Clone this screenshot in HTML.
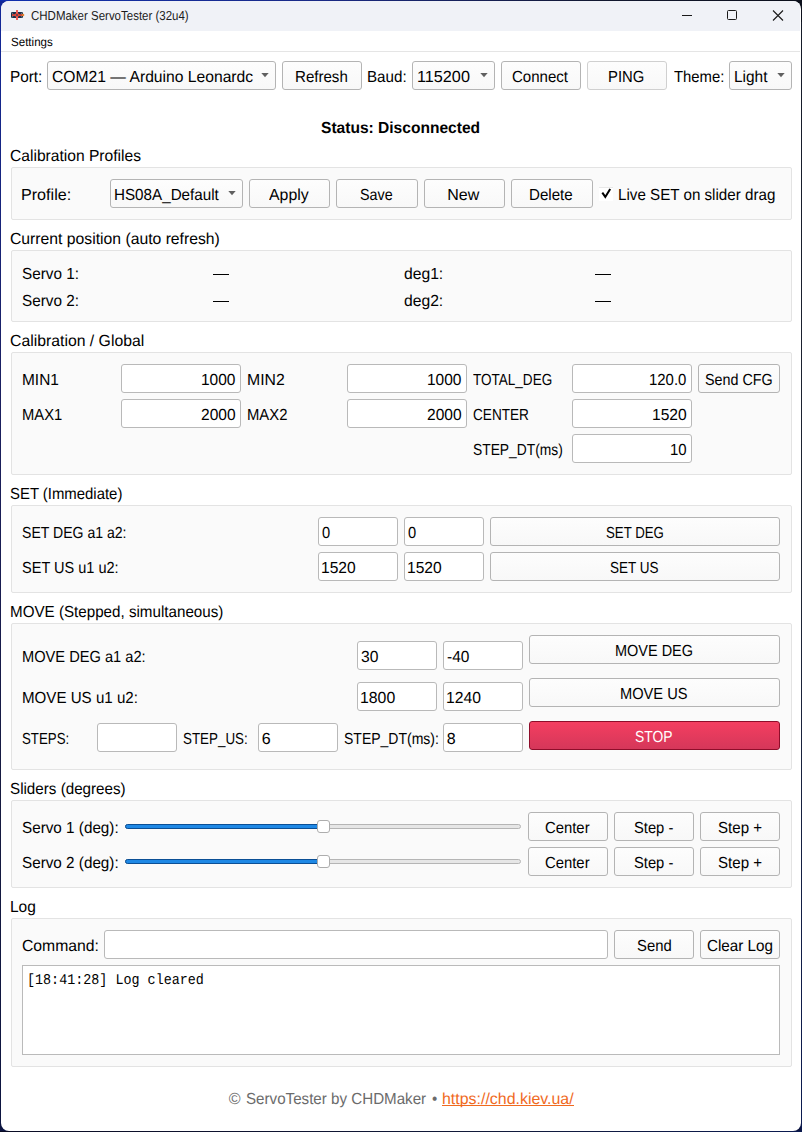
<!DOCTYPE html>
<html><head><meta charset="utf-8"><title>CHDMaker ServoTester</title>
<style>html,body{margin:0;padding:0;width:802px;height:1132px;overflow:hidden;background:#fff;font-family:"Liberation Sans",sans-serif;text-rendering:geometricPrecision}</style>
</head><body>
<div style="position:absolute;left:0;top:0;width:802px;height:1132px;background:linear-gradient(180deg,#12289a 0%,#1b2060 35%,#161a40 70%,#0c1440 100%)"></div>
<div style="position:absolute;left:0;top:0;width:802px;height:1px;background:linear-gradient(90deg,#0f2fae 0%,#1a2a86 40%,#121830 75%,#0c101c 100%)"></div>
<div style="position:absolute;left:801px;top:0;width:1px;height:1132px;background:linear-gradient(180deg,#141a28 0%,#1f2533 50%,#0a1a50 100%)"></div>
<div style="position:absolute;left:0;top:1131px;width:802px;height:1px;background:linear-gradient(90deg,#0a0c24 0%,#121a3a 60%,#0a1a50 100%)"></div>
<div style="position:absolute;left:780px;top:0;width:22px;height:22px;background:#0c101c"></div>
<div style="position:absolute;left:1px;top:1px;width:800px;height:1130px;background:#fff;border-radius:8px;overflow:hidden"><div style="position:absolute;left:0;top:0;width:799px;height:30px;background:#f0f2f7"></div><div style="position:absolute;left:0;top:50px;width:799px;height:1px;background:#e5e5e5"></div></div>
<svg style="position:absolute;left:0;top:0" width="40" height="32"><rect x="11" y="12" width="12" height="6" rx="1.2" fill="#1b3049"/><rect x="12" y="14.2" width="10" height="1.8" fill="#d8473c"/><rect x="16" y="10" width="2" height="10" fill="#ef5f58"/><circle cx="17" cy="15" r="2.1" fill="#ee4535"/><circle cx="17" cy="15" r="0.9" fill="#34465f"/><circle cx="12.6" cy="13.2" r="0.5" fill="#9aa8b0"/><circle cx="12.6" cy="16.8" r="0.5" fill="#9aa8b0"/><circle cx="21.4" cy="13.2" r="0.5" fill="#9aa8b0"/><circle cx="21.4" cy="16.8" r="0.5" fill="#9aa8b0"/><circle cx="23" cy="15" r="1.3" fill="#e0802e"/></svg>
<svg style="position:absolute;left:670px;top:0" width="132" height="31"><line x1="12" y1="15.5" x2="22" y2="15.5" stroke="#1a1a1a" stroke-width="1"/><rect x="57.5" y="10.5" width="9" height="9" rx="1" fill="none" stroke="#1a1a1a" stroke-width="1"/><path d="M103 10.5 L113 20.5 M113 10.5 L103 20.5" stroke="#1a1a1a" stroke-width="1.1"/></svg>
<div style="position:absolute;left:47px;top:61px;width:229px;height:29px;box-sizing:border-box;background:linear-gradient(#fdfdfd,#f8f8f8);border:1px solid #b4b4b4;border-radius:3px;"></div>
<svg style="position:absolute;left:259.8px;top:72px" width="10" height="8"><polygon points="1.3,1.1 8.7,1.1 5,5.3" fill="#606060"/></svg>
<div style="position:absolute;left:282px;top:61px;width:80px;height:29px;box-sizing:border-box;background:linear-gradient(#fdfdfd,#f8f8f8);border:1px solid #b4b4b4;border-radius:3px;"></div>
<div style="position:absolute;left:412px;top:61px;width:83px;height:29px;box-sizing:border-box;background:linear-gradient(#fdfdfd,#f8f8f8);border:1px solid #b4b4b4;border-radius:3px;"></div>
<svg style="position:absolute;left:479px;top:72px" width="10" height="8"><polygon points="1.3,1.1 8.7,1.1 5,5.3" fill="#606060"/></svg>
<div style="position:absolute;left:501px;top:61px;width:80px;height:29px;box-sizing:border-box;background:linear-gradient(#fdfdfd,#f8f8f8);border:1px solid #b4b4b4;border-radius:3px;"></div>
<div style="position:absolute;left:587px;top:61px;width:80px;height:29px;box-sizing:border-box;background:linear-gradient(#fdfdfd,#f8f8f8);border:1px solid #d0d0d0;border-radius:3px;"></div>
<div style="position:absolute;left:729px;top:61px;width:63px;height:29px;box-sizing:border-box;background:linear-gradient(#fdfdfd,#f8f8f8);border:1px solid #b4b4b4;border-radius:3px;"></div>
<svg style="position:absolute;left:775.5px;top:72px" width="10" height="8"><polygon points="1.3,1.1 8.7,1.1 5,5.3" fill="#606060"/></svg>
<div style="position:absolute;left:11px;top:167px;width:781px;height:53px;box-sizing:border-box;background:#fafafa;border:1px solid #e3e3e3;border-radius:2px;"></div>
<div style="position:absolute;left:110px;top:179px;width:133px;height:29px;box-sizing:border-box;background:linear-gradient(#fdfdfd,#f8f8f8);border:1px solid #b4b4b4;border-radius:3px;"></div>
<svg style="position:absolute;left:226.6px;top:190px" width="10" height="8"><polygon points="1.3,1.1 8.7,1.1 5,5.3" fill="#606060"/></svg>
<div style="position:absolute;left:249px;top:179px;width:81px;height:29px;box-sizing:border-box;background:linear-gradient(#fdfdfd,#f8f8f8);border:1px solid #b4b4b4;border-radius:3px;"></div>
<div style="position:absolute;left:336px;top:179px;width:82px;height:29px;box-sizing:border-box;background:linear-gradient(#fdfdfd,#f8f8f8);border:1px solid #b4b4b4;border-radius:3px;"></div>
<div style="position:absolute;left:424px;top:179px;width:81px;height:29px;box-sizing:border-box;background:linear-gradient(#fdfdfd,#f8f8f8);border:1px solid #b4b4b4;border-radius:3px;"></div>
<div style="position:absolute;left:511px;top:179px;width:82px;height:29px;box-sizing:border-box;background:linear-gradient(#fdfdfd,#f8f8f8);border:1px solid #b4b4b4;border-radius:3px;"></div>
<div style="position:absolute;left:599px;top:187px;width:14px;height:13px;background:#fff;border-top:1px solid #e8e8e8"></div>
<svg style="position:absolute;left:599px;top:186px" width="14" height="14"><path d="M3.3 6.6 L6.3 10.9 L11.2 2.9" fill="none" stroke="#000" stroke-width="2" stroke-linecap="butt" stroke-linejoin="miter"/></svg>
<div style="position:absolute;left:11px;top:250px;width:781px;height:72px;box-sizing:border-box;background:#fafafa;border:1px solid #e3e3e3;border-radius:2px;"></div>
<div style="position:absolute;left:213px;top:274px;width:16px;height:1px;box-sizing:border-box;background:#000;"></div>
<div style="position:absolute;left:595px;top:274px;width:16px;height:1px;box-sizing:border-box;background:#000;"></div>
<div style="position:absolute;left:213px;top:301px;width:16px;height:1px;box-sizing:border-box;background:#000;"></div>
<div style="position:absolute;left:595px;top:301px;width:16px;height:1px;box-sizing:border-box;background:#000;"></div>
<div style="position:absolute;left:11px;top:352px;width:781px;height:123px;box-sizing:border-box;background:#fafafa;border:1px solid #e3e3e3;border-radius:2px;"></div>
<div style="position:absolute;left:121px;top:364px;width:120px;height:29px;box-sizing:border-box;background:#fff;border:1px solid #b9b9b9;border-radius:3px;"></div>
<div style="position:absolute;left:121px;top:399px;width:120px;height:29px;box-sizing:border-box;background:#fff;border:1px solid #b9b9b9;border-radius:3px;"></div>
<div style="position:absolute;left:347px;top:364px;width:120px;height:29px;box-sizing:border-box;background:#fff;border:1px solid #b9b9b9;border-radius:3px;"></div>
<div style="position:absolute;left:347px;top:399px;width:120px;height:29px;box-sizing:border-box;background:#fff;border:1px solid #b9b9b9;border-radius:3px;"></div>
<div style="position:absolute;left:572px;top:364px;width:120px;height:29px;box-sizing:border-box;background:#fff;border:1px solid #b9b9b9;border-radius:3px;"></div>
<div style="position:absolute;left:572px;top:399px;width:120px;height:29px;box-sizing:border-box;background:#fff;border:1px solid #b9b9b9;border-radius:3px;"></div>
<div style="position:absolute;left:572px;top:434px;width:120px;height:29px;box-sizing:border-box;background:#fff;border:1px solid #b9b9b9;border-radius:3px;"></div>
<div style="position:absolute;left:698px;top:364px;width:82px;height:29px;box-sizing:border-box;background:linear-gradient(#fdfdfd,#f8f8f8);border:1px solid #b4b4b4;border-radius:3px;"></div>
<div style="position:absolute;left:11px;top:505px;width:781px;height:88px;box-sizing:border-box;background:#fafafa;border:1px solid #e3e3e3;border-radius:2px;"></div>
<div style="position:absolute;left:318px;top:517px;width:80px;height:29px;box-sizing:border-box;background:#fff;border:1px solid #b9b9b9;border-radius:3px;"></div>
<div style="position:absolute;left:404px;top:517px;width:80px;height:29px;box-sizing:border-box;background:#fff;border:1px solid #b9b9b9;border-radius:3px;"></div>
<div style="position:absolute;left:318px;top:552px;width:80px;height:29px;box-sizing:border-box;background:#fff;border:1px solid #b9b9b9;border-radius:3px;"></div>
<div style="position:absolute;left:404px;top:552px;width:80px;height:29px;box-sizing:border-box;background:#fff;border:1px solid #b9b9b9;border-radius:3px;"></div>
<div style="position:absolute;left:490px;top:517px;width:290px;height:29px;box-sizing:border-box;background:linear-gradient(#fdfdfd,#f8f8f8);border:1px solid #b4b4b4;border-radius:3px;"></div>
<div style="position:absolute;left:490px;top:552px;width:290px;height:29px;box-sizing:border-box;background:linear-gradient(#fdfdfd,#f8f8f8);border:1px solid #b4b4b4;border-radius:3px;"></div>
<div style="position:absolute;left:11px;top:623px;width:781px;height:147px;box-sizing:border-box;background:#fafafa;border:1px solid #e3e3e3;border-radius:2px;"></div>
<div style="position:absolute;left:357px;top:641px;width:80px;height:29px;box-sizing:border-box;background:#fff;border:1px solid #b9b9b9;border-radius:3px;"></div>
<div style="position:absolute;left:443px;top:641px;width:80px;height:29px;box-sizing:border-box;background:#fff;border:1px solid #b9b9b9;border-radius:3px;"></div>
<div style="position:absolute;left:357px;top:682px;width:80px;height:29px;box-sizing:border-box;background:#fff;border:1px solid #b9b9b9;border-radius:3px;"></div>
<div style="position:absolute;left:443px;top:682px;width:80px;height:29px;box-sizing:border-box;background:#fff;border:1px solid #b9b9b9;border-radius:3px;"></div>
<div style="position:absolute;left:97px;top:723px;width:80px;height:29px;box-sizing:border-box;background:#fff;border:1px solid #b9b9b9;border-radius:3px;"></div>
<div style="position:absolute;left:258px;top:723px;width:80px;height:29px;box-sizing:border-box;background:#fff;border:1px solid #b9b9b9;border-radius:3px;"></div>
<div style="position:absolute;left:443px;top:723px;width:80px;height:29px;box-sizing:border-box;background:#fff;border:1px solid #b9b9b9;border-radius:3px;"></div>
<div style="position:absolute;left:529px;top:635px;width:251px;height:29px;box-sizing:border-box;background:linear-gradient(#fdfdfd,#f8f8f8);border:1px solid #b4b4b4;border-radius:3px;"></div>
<div style="position:absolute;left:529px;top:678px;width:251px;height:29px;box-sizing:border-box;background:linear-gradient(#fdfdfd,#f8f8f8);border:1px solid #b4b4b4;border-radius:3px;"></div>
<div style="position:absolute;left:529px;top:721px;width:251px;height:29px;box-sizing:border-box;background:linear-gradient(#f43e60,#d5375a);border:1px solid #8e0d2a;border-radius:3px;"></div>
<div style="position:absolute;left:11px;top:800px;width:781px;height:88px;box-sizing:border-box;background:#fafafa;border:1px solid #e3e3e3;border-radius:2px;"></div>
<div style="position:absolute;left:125px;top:824px;width:396px;height:5px;box-sizing:border-box;background:#e6e6e6;border:1px solid #b5b5b5;border-radius:3px;"></div>
<div style="position:absolute;left:125px;top:824px;width:195px;height:5px;box-sizing:border-box;background:#1e88e5;border:1px solid #0b4f95;border-radius:3px 0 0 3px;"></div>
<div style="position:absolute;left:317px;top:820px;width:13px;height:13px;box-sizing:border-box;background:#fff;border:1px solid #adadad;border-radius:3px;"></div>
<div style="position:absolute;left:528px;top:812px;width:80px;height:29px;box-sizing:border-box;background:linear-gradient(#fdfdfd,#f8f8f8);border:1px solid #b4b4b4;border-radius:3px;"></div>
<div style="position:absolute;left:614px;top:812px;width:80px;height:29px;box-sizing:border-box;background:linear-gradient(#fdfdfd,#f8f8f8);border:1px solid #b4b4b4;border-radius:3px;"></div>
<div style="position:absolute;left:700px;top:812px;width:80px;height:29px;box-sizing:border-box;background:linear-gradient(#fdfdfd,#f8f8f8);border:1px solid #b4b4b4;border-radius:3px;"></div>
<div style="position:absolute;left:125px;top:859px;width:396px;height:5px;box-sizing:border-box;background:#e6e6e6;border:1px solid #b5b5b5;border-radius:3px;"></div>
<div style="position:absolute;left:125px;top:859px;width:195px;height:5px;box-sizing:border-box;background:#1e88e5;border:1px solid #0b4f95;border-radius:3px 0 0 3px;"></div>
<div style="position:absolute;left:317px;top:855px;width:13px;height:13px;box-sizing:border-box;background:#fff;border:1px solid #adadad;border-radius:3px;"></div>
<div style="position:absolute;left:528px;top:847px;width:80px;height:29px;box-sizing:border-box;background:linear-gradient(#fdfdfd,#f8f8f8);border:1px solid #b4b4b4;border-radius:3px;"></div>
<div style="position:absolute;left:614px;top:847px;width:80px;height:29px;box-sizing:border-box;background:linear-gradient(#fdfdfd,#f8f8f8);border:1px solid #b4b4b4;border-radius:3px;"></div>
<div style="position:absolute;left:700px;top:847px;width:80px;height:29px;box-sizing:border-box;background:linear-gradient(#fdfdfd,#f8f8f8);border:1px solid #b4b4b4;border-radius:3px;"></div>
<div style="position:absolute;left:11px;top:918px;width:781px;height:149px;box-sizing:border-box;background:#fafafa;border:1px solid #e3e3e3;border-radius:2px;"></div>
<div style="position:absolute;left:104px;top:930px;width:504px;height:29px;box-sizing:border-box;background:#fff;border:1px solid #b9b9b9;border-radius:3px;"></div>
<div style="position:absolute;left:614px;top:930px;width:80px;height:29px;box-sizing:border-box;background:linear-gradient(#fdfdfd,#f8f8f8);border:1px solid #b4b4b4;border-radius:3px;"></div>
<div style="position:absolute;left:700px;top:930px;width:80px;height:29px;box-sizing:border-box;background:linear-gradient(#fdfdfd,#f8f8f8);border:1px solid #b4b4b4;border-radius:3px;"></div>
<div style="position:absolute;left:22px;top:965px;width:758px;height:90px;box-sizing:border-box;background:#fff;border:1px solid #bababa;"></div>
<!--footer-->
<div style="position:absolute;left:442px;top:1105px;width:132px;height:1px;box-sizing:border-box;background:#f06a1e;"></div>
<div style="position:absolute;left:31.00px;top:6.00px;white-space:nowrap;line-height:20px;font:13px 'Liberation Sans', sans-serif;line-height:20px;color:#1c1c1c;transform-origin:0 0;transform:scaleX(0.8837);">CHDMaker ServoTester (32u4)</div>
<div style="position:absolute;left:10.70px;top:31.50px;white-space:nowrap;line-height:20px;font:12px 'Liberation Sans', sans-serif;line-height:20px;color:#000;transform-origin:0 0;transform:scaleX(0.9640);">Settings</div>
<div style="position:absolute;left:9.74px;top:68.00px;white-space:nowrap;line-height:20px;font:16px 'Liberation Sans', sans-serif;line-height:20px;color:#000;transform-origin:0 0;transform:scaleX(0.9571);">Port:</div>
<div style="position:absolute;left:52.10px;top:68.00px;white-space:nowrap;line-height:20px;font:16px 'Liberation Sans', sans-serif;line-height:20px;color:#000;transform-origin:0 0;transform:scaleX(0.9790);">COM21 — Arduino Leonardc</div>
<div style="position:absolute;left:294.96px;top:68.00px;white-space:nowrap;line-height:20px;font:16px 'Liberation Sans', sans-serif;line-height:20px;color:#000;transform-origin:0 0;transform:scaleX(0.9423);">Refresh</div>
<div style="position:absolute;left:367.45px;top:68.00px;white-space:nowrap;line-height:20px;font:16px 'Liberation Sans', sans-serif;line-height:20px;color:#000;transform-origin:0 0;transform:scaleX(0.9475);">Baud:</div>
<div style="position:absolute;left:417.39px;top:68.00px;white-space:nowrap;line-height:20px;font:16px 'Liberation Sans', sans-serif;line-height:20px;color:#000;transform-origin:0 0;transform:scaleX(1.0136);">115200</div>
<div style="position:absolute;left:512.15px;top:68.00px;white-space:nowrap;line-height:20px;font:16px 'Liberation Sans', sans-serif;line-height:20px;color:#000;transform-origin:0 0;transform:scaleX(0.9393);">Connect</div>
<div style="position:absolute;left:608.02px;top:68.00px;white-space:nowrap;line-height:20px;font:16px 'Liberation Sans', sans-serif;line-height:20px;color:#000;transform-origin:0 0;transform:scaleX(0.9264);">PING</div>
<div style="position:absolute;left:673.50px;top:68.00px;white-space:nowrap;line-height:20px;font:16px 'Liberation Sans', sans-serif;line-height:20px;color:#000;transform-origin:0 0;transform:scaleX(0.9281);">Theme:</div>
<div style="position:absolute;left:734.14px;top:68.00px;white-space:nowrap;line-height:20px;font:16px 'Liberation Sans', sans-serif;line-height:20px;color:#000;transform-origin:0 0;transform:scaleX(0.9635);">Light</div>
<div style="position:absolute;left:320.90px;top:119.00px;white-space:nowrap;line-height:20px;font:bold 16px 'Liberation Sans', sans-serif;line-height:20px;color:#000;transform-origin:0 0;transform:scaleX(0.9723);">Status: Disconnected</div>
<div style="position:absolute;left:10.20px;top:147.00px;white-space:nowrap;line-height:20px;font:16px 'Liberation Sans', sans-serif;line-height:20px;color:#000;transform-origin:0 0;transform:scaleX(0.9756);">Calibration Profiles</div>
<div style="position:absolute;left:21.09px;top:186.00px;white-space:nowrap;line-height:20px;font:16px 'Liberation Sans', sans-serif;line-height:20px;color:#000;transform-origin:0 0;transform:scaleX(1.0074);">Profile:</div>
<div style="position:absolute;left:114.35px;top:186.00px;white-space:nowrap;line-height:20px;font:16px 'Liberation Sans', sans-serif;line-height:20px;color:#000;transform-origin:0 0;transform:scaleX(0.9504);">HS08A_Default</div>
<div style="position:absolute;left:269.05px;top:186.00px;white-space:nowrap;line-height:20px;font:16px 'Liberation Sans', sans-serif;line-height:20px;color:#000;transform-origin:0 0;transform:scaleX(0.9919);">Apply</div>
<div style="position:absolute;left:360.05px;top:186.00px;white-space:nowrap;line-height:20px;font:16px 'Liberation Sans', sans-serif;line-height:20px;color:#000;transform-origin:0 0;transform:scaleX(0.8942);">Save</div>
<div style="position:absolute;left:447.20px;top:186.00px;white-space:nowrap;line-height:20px;font:16px 'Liberation Sans', sans-serif;line-height:20px;color:#000;transform-origin:0 0;">New</div>
<div style="position:absolute;left:529.06px;top:186.00px;white-space:nowrap;line-height:20px;font:16px 'Liberation Sans', sans-serif;line-height:20px;color:#000;transform-origin:0 0;transform:scaleX(0.9437);">Delete</div>
<div style="position:absolute;left:617.75px;top:186.00px;white-space:nowrap;line-height:20px;font:16px 'Liberation Sans', sans-serif;line-height:20px;color:#000;transform-origin:0 0;transform:scaleX(0.9477);">Live SET on slider drag</div>
<div style="position:absolute;left:10.20px;top:230.00px;white-space:nowrap;line-height:20px;font:16px 'Liberation Sans', sans-serif;line-height:20px;color:#000;transform-origin:0 0;transform:scaleX(0.9831);">Current position (auto refresh)</div>
<div style="position:absolute;left:22.20px;top:265.00px;white-space:nowrap;line-height:20px;font:16px 'Liberation Sans', sans-serif;line-height:20px;color:#000;transform-origin:0 0;transform:scaleX(0.9563);">Servo 1:</div>
<div style="position:absolute;left:22.20px;top:292.00px;white-space:nowrap;line-height:20px;font:16px 'Liberation Sans', sans-serif;line-height:20px;color:#000;transform-origin:0 0;transform:scaleX(0.9563);">Servo 2:</div>
<div style="position:absolute;left:404.00px;top:265.00px;white-space:nowrap;line-height:20px;font:16px 'Liberation Sans', sans-serif;line-height:20px;color:#000;transform-origin:0 0;transform:scaleX(0.9794);">deg1:</div>
<div style="position:absolute;left:404.00px;top:292.00px;white-space:nowrap;line-height:20px;font:16px 'Liberation Sans', sans-serif;line-height:20px;color:#000;transform-origin:0 0;transform:scaleX(0.9794);">deg2:</div>
<div style="position:absolute;left:10.10px;top:332.00px;white-space:nowrap;line-height:20px;font:16px 'Liberation Sans', sans-serif;line-height:20px;color:#000;transform-origin:0 0;transform:scaleX(0.9866);">Calibration / Global</div>
<div style="position:absolute;left:22.24px;top:371.00px;white-space:nowrap;line-height:20px;font:16px 'Liberation Sans', sans-serif;line-height:20px;color:#000;transform-origin:0 0;transform:scaleX(0.9644);">MIN1</div>
<div style="position:absolute;left:22.28px;top:406.00px;white-space:nowrap;line-height:20px;font:16px 'Liberation Sans', sans-serif;line-height:20px;color:#000;transform-origin:0 0;transform:scaleX(0.9233);">MAX1</div>
<div style="position:absolute;left:200.93px;top:371.00px;white-space:nowrap;line-height:20px;font:16px 'Liberation Sans', sans-serif;line-height:20px;color:#000;transform-origin:0 0;transform:scaleX(0.9684);">1000</div>
<div style="position:absolute;left:200.90px;top:406.00px;white-space:nowrap;line-height:20px;font:16px 'Liberation Sans', sans-serif;line-height:20px;color:#000;transform-origin:0 0;transform:scaleX(0.9693);">2000</div>
<div style="position:absolute;left:247.31px;top:371.00px;white-space:nowrap;line-height:20px;font:16px 'Liberation Sans', sans-serif;line-height:20px;color:#000;transform-origin:0 0;transform:scaleX(0.9859);">MIN2</div>
<div style="position:absolute;left:247.37px;top:406.00px;white-space:nowrap;line-height:20px;font:16px 'Liberation Sans', sans-serif;line-height:20px;color:#000;transform-origin:0 0;transform:scaleX(0.9280);">MAX2</div>
<div style="position:absolute;left:426.93px;top:371.00px;white-space:nowrap;line-height:20px;font:16px 'Liberation Sans', sans-serif;line-height:20px;color:#000;transform-origin:0 0;transform:scaleX(0.9684);">1000</div>
<div style="position:absolute;left:426.90px;top:406.00px;white-space:nowrap;line-height:20px;font:16px 'Liberation Sans', sans-serif;line-height:20px;color:#000;transform-origin:0 0;transform:scaleX(0.9693);">2000</div>
<div style="position:absolute;left:473.20px;top:371.00px;white-space:nowrap;line-height:20px;font:16px 'Liberation Sans', sans-serif;line-height:20px;color:#000;transform-origin:0 0;transform:scaleX(0.8454);">TOTAL_DEG</div>
<div style="position:absolute;left:473.20px;top:406.00px;white-space:nowrap;line-height:20px;font:16px 'Liberation Sans', sans-serif;line-height:20px;color:#000;transform-origin:0 0;transform:scaleX(0.8493);">CENTER</div>
<div style="position:absolute;left:473.20px;top:441.00px;white-space:nowrap;line-height:20px;font:16px 'Liberation Sans', sans-serif;line-height:20px;color:#000;transform-origin:0 0;transform:scaleX(0.8633);">STEP_DT(ms)</div>
<div style="position:absolute;left:649.07px;top:371.00px;white-space:nowrap;line-height:20px;font:16px 'Liberation Sans', sans-serif;line-height:20px;color:#000;transform-origin:0 0;transform:scaleX(0.9325);">120.0</div>
<div style="position:absolute;left:651.73px;top:406.00px;white-space:nowrap;line-height:20px;font:16px 'Liberation Sans', sans-serif;line-height:20px;color:#000;transform-origin:0 0;transform:scaleX(0.9742);">1520</div>
<div style="position:absolute;left:669.77px;top:441.00px;white-space:nowrap;line-height:20px;font:16px 'Liberation Sans', sans-serif;line-height:20px;color:#000;transform-origin:0 0;transform:scaleX(0.9350);">10</div>
<div style="position:absolute;left:704.75px;top:371.00px;white-space:nowrap;line-height:20px;font:16px 'Liberation Sans', sans-serif;line-height:20px;color:#000;transform-origin:0 0;transform:scaleX(0.8957);">Send CFG</div>
<div style="position:absolute;left:9.60px;top:485.00px;white-space:nowrap;line-height:20px;font:16px 'Liberation Sans', sans-serif;line-height:20px;color:#000;transform-origin:0 0;transform:scaleX(0.9313);">SET (Immediate)</div>
<div style="position:absolute;left:22.20px;top:524.00px;white-space:nowrap;line-height:20px;font:16px 'Liberation Sans', sans-serif;line-height:20px;color:#000;transform-origin:0 0;transform:scaleX(0.8792);">SET DEG a1 a2:</div>
<div style="position:absolute;left:22.30px;top:559.00px;white-space:nowrap;line-height:20px;font:16px 'Liberation Sans', sans-serif;line-height:20px;color:#000;transform-origin:0 0;transform:scaleX(0.9081);">SET US u1 u2:</div>
<div style="position:absolute;left:321.70px;top:524.00px;white-space:nowrap;line-height:20px;font:16px 'Liberation Sans', sans-serif;line-height:20px;color:#000;transform-origin:0 0;transform:scaleX(0.9167);">0</div>
<div style="position:absolute;left:407.70px;top:524.00px;white-space:nowrap;line-height:20px;font:16px 'Liberation Sans', sans-serif;line-height:20px;color:#000;transform-origin:0 0;transform:scaleX(0.9167);">0</div>
<div style="position:absolute;left:320.73px;top:559.00px;white-space:nowrap;line-height:20px;font:16px 'Liberation Sans', sans-serif;line-height:20px;color:#000;transform-origin:0 0;transform:scaleX(0.9742);">1520</div>
<div style="position:absolute;left:406.73px;top:559.00px;white-space:nowrap;line-height:20px;font:16px 'Liberation Sans', sans-serif;line-height:20px;color:#000;transform-origin:0 0;transform:scaleX(0.9742);">1520</div>
<div style="position:absolute;left:605.50px;top:524.00px;white-space:nowrap;line-height:20px;font:16px 'Liberation Sans', sans-serif;line-height:20px;color:#000;transform-origin:0 0;transform:scaleX(0.8282);">SET DEG</div>
<div style="position:absolute;left:610.30px;top:559.00px;white-space:nowrap;line-height:20px;font:16px 'Liberation Sans', sans-serif;line-height:20px;color:#000;transform-origin:0 0;transform:scaleX(0.8439);">SET US</div>
<div style="position:absolute;left:10.25px;top:603.00px;white-space:nowrap;line-height:20px;font:16px 'Liberation Sans', sans-serif;line-height:20px;color:#000;transform-origin:0 0;transform:scaleX(0.9483);">MOVE (Stepped, simultaneous)</div>
<div style="position:absolute;left:22.49px;top:648.00px;white-space:nowrap;line-height:20px;font:16px 'Liberation Sans', sans-serif;line-height:20px;color:#000;transform-origin:0 0;transform:scaleX(0.9147);">MOVE DEG a1 a2:</div>
<div style="position:absolute;left:22.46px;top:689.00px;white-space:nowrap;line-height:20px;font:16px 'Liberation Sans', sans-serif;line-height:20px;color:#000;transform-origin:0 0;transform:scaleX(0.9445);">MOVE US u1 u2:</div>
<div style="position:absolute;left:22.20px;top:730.00px;white-space:nowrap;line-height:20px;font:16px 'Liberation Sans', sans-serif;line-height:20px;color:#000;transform-origin:0 0;transform:scaleX(0.8294);">STEPS:</div>
<div style="position:absolute;left:360.70px;top:648.00px;white-space:nowrap;line-height:20px;font:16px 'Liberation Sans', sans-serif;line-height:20px;color:#000;transform-origin:0 0;transform:scaleX(0.9777);">30</div>
<div style="position:absolute;left:446.70px;top:648.00px;white-space:nowrap;line-height:20px;font:16px 'Liberation Sans', sans-serif;line-height:20px;color:#000;transform-origin:0 0;transform:scaleX(0.9687);">-40</div>
<div style="position:absolute;left:359.71px;top:689.00px;white-space:nowrap;line-height:20px;font:16px 'Liberation Sans', sans-serif;line-height:20px;color:#000;transform-origin:0 0;transform:scaleX(0.9886);">1800</div>
<div style="position:absolute;left:445.72px;top:689.00px;white-space:nowrap;line-height:20px;font:16px 'Liberation Sans', sans-serif;line-height:20px;color:#000;transform-origin:0 0;transform:scaleX(0.9800);">1240</div>
<div style="position:absolute;left:183.00px;top:730.00px;white-space:nowrap;line-height:20px;font:16px 'Liberation Sans', sans-serif;line-height:20px;color:#000;transform-origin:0 0;transform:scaleX(0.8365);">STEP_US:</div>
<div style="position:absolute;left:261.70px;top:730.00px;white-space:nowrap;line-height:20px;font:16px 'Liberation Sans', sans-serif;line-height:20px;color:#000;transform-origin:0 0;">6</div>
<div style="position:absolute;left:344.30px;top:730.00px;white-space:nowrap;line-height:20px;font:16px 'Liberation Sans', sans-serif;line-height:20px;color:#000;transform-origin:0 0;transform:scaleX(0.8748);">STEP_DT(ms):</div>
<div style="position:absolute;left:446.70px;top:730.00px;white-space:nowrap;line-height:20px;font:16px 'Liberation Sans', sans-serif;line-height:20px;color:#000;transform-origin:0 0;">8</div>
<div style="position:absolute;left:614.65px;top:642.00px;white-space:nowrap;line-height:20px;font:16px 'Liberation Sans', sans-serif;line-height:20px;color:#000;transform-origin:0 0;transform:scaleX(0.9046);">MOVE DEG</div>
<div style="position:absolute;left:619.98px;top:685.00px;white-space:nowrap;line-height:20px;font:16px 'Liberation Sans', sans-serif;line-height:20px;color:#000;transform-origin:0 0;transform:scaleX(0.9152);">MOVE US</div>
<div style="position:absolute;left:635.40px;top:728.00px;white-space:nowrap;line-height:20px;font:16px 'Liberation Sans', sans-serif;line-height:20px;color:#fff;transform-origin:0 0;transform:scaleX(0.8685);">STOP</div>
<div style="position:absolute;left:10.10px;top:779.50px;white-space:nowrap;line-height:20px;font:16px 'Liberation Sans', sans-serif;line-height:20px;color:#000;transform-origin:0 0;transform:scaleX(0.9490);">Sliders (degrees)</div>
<div style="position:absolute;left:22.20px;top:818.50px;white-space:nowrap;line-height:20px;font:16px 'Liberation Sans', sans-serif;line-height:20px;color:#000;transform-origin:0 0;transform:scaleX(0.9536);">Servo 1 (deg):</div>
<div style="position:absolute;left:544.80px;top:819.00px;white-space:nowrap;line-height:20px;font:16px 'Liberation Sans', sans-serif;line-height:20px;color:#000;transform-origin:0 0;transform:scaleX(0.9282);">Center</div>
<div style="position:absolute;left:633.90px;top:819.00px;white-space:nowrap;line-height:20px;font:16px 'Liberation Sans', sans-serif;line-height:20px;color:#000;transform-origin:0 0;transform:scaleX(0.9207);">Step -</div>
<div style="position:absolute;left:717.55px;top:819.00px;white-space:nowrap;line-height:20px;font:16px 'Liberation Sans', sans-serif;line-height:20px;color:#000;transform-origin:0 0;transform:scaleX(0.9426);">Step +</div>
<div style="position:absolute;left:22.20px;top:853.50px;white-space:nowrap;line-height:20px;font:16px 'Liberation Sans', sans-serif;line-height:20px;color:#000;transform-origin:0 0;transform:scaleX(0.9536);">Servo 2 (deg):</div>
<div style="position:absolute;left:544.80px;top:854.00px;white-space:nowrap;line-height:20px;font:16px 'Liberation Sans', sans-serif;line-height:20px;color:#000;transform-origin:0 0;transform:scaleX(0.9282);">Center</div>
<div style="position:absolute;left:633.90px;top:854.00px;white-space:nowrap;line-height:20px;font:16px 'Liberation Sans', sans-serif;line-height:20px;color:#000;transform-origin:0 0;transform:scaleX(0.9207);">Step -</div>
<div style="position:absolute;left:717.55px;top:854.00px;white-space:nowrap;line-height:20px;font:16px 'Liberation Sans', sans-serif;line-height:20px;color:#000;transform-origin:0 0;transform:scaleX(0.9426);">Step +</div>
<div style="position:absolute;left:10.23px;top:898.00px;white-space:nowrap;line-height:20px;font:16px 'Liberation Sans', sans-serif;line-height:20px;color:#000;transform-origin:0 0;transform:scaleX(0.9679);">Log</div>
<div style="position:absolute;left:22.20px;top:937.00px;white-space:nowrap;line-height:20px;font:16px 'Liberation Sans', sans-serif;line-height:20px;color:#000;transform-origin:0 0;transform:scaleX(0.9830);">Command:</div>
<div style="position:absolute;left:636.50px;top:937.00px;white-space:nowrap;line-height:20px;font:16px 'Liberation Sans', sans-serif;line-height:20px;color:#000;transform-origin:0 0;transform:scaleX(0.9268);">Send</div>
<div style="position:absolute;left:706.85px;top:937.00px;white-space:nowrap;line-height:20px;font:16px 'Liberation Sans', sans-serif;line-height:20px;color:#000;transform-origin:0 0;transform:scaleX(0.9507);">Clear Log</div>
<div style="position:absolute;left:26.92px;top:971.00px;white-space:nowrap;line-height:20px;font:15px 'Liberation Mono', monospace;line-height:20px;color:#000;transform-origin:0 0;transform:scaleX(0.8932);">[18:41:28] Log cleared</div>
<div style="position:absolute;left:228.70px;top:1090.00px;white-space:nowrap;line-height:20px;font:16px 'Liberation Sans', sans-serif;line-height:20px;color:#6b6b6b;transform-origin:0 0;">©</div>
<div style="position:absolute;left:245.70px;top:1090.00px;white-space:nowrap;line-height:20px;font:16px 'Liberation Sans', sans-serif;line-height:20px;color:#6b6b6b;transform-origin:0 0;transform:scaleX(0.9469);">ServoTester by CHDMaker</div>
<div style="position:absolute;left:431.50px;top:1090.00px;white-space:nowrap;line-height:20px;font:16px 'Liberation Sans', sans-serif;line-height:20px;color:#6b6b6b;transform-origin:0 0;transform:scaleX(0.9400);">•</div>
<div style="position:absolute;left:441.70px;top:1090.00px;white-space:nowrap;line-height:20px;font:16px 'Liberation Sans', sans-serif;line-height:20px;color:#f06a1e;transform-origin:0 0;transform:scaleX(0.9956);">https://chd.kiev.ua/</div>
</body></html>
